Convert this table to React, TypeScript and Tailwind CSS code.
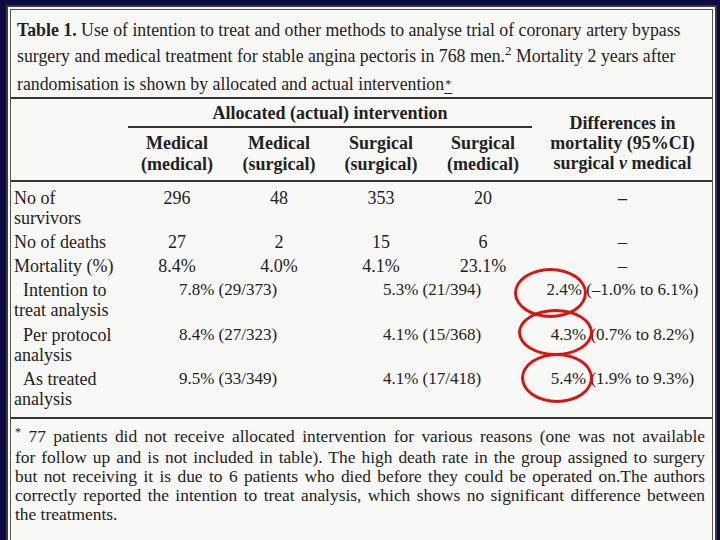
import React from "react";

const justifyLine = "block text-justify [text-align-last:justify]";

function Ring({ className }: { className: string }) {
  return (
    <div
      className={`pointer-events-none absolute rounded-[50%] border-[3px] border-[#d31616] ${className}`}
    />
  );
}

function Rule() {
  return <div className="h-[2px] bg-[#353535]" />;
}

export default function App() {
  return (
    <div className="h-[540px] w-[720px] overflow-hidden bg-[#0c0c44] pl-[6px] pr-[3px] pt-[5px]">
      <div className="h-[540px] border-2 border-[#3a3a3a] bg-[#f8f8f6] p-[2px]">
        <div className="h-full border border-[#555] font-['Liberation_Serif','Times_New_Roman',serif] text-[#222]">
          {/* caption */}
          <div className="pl-[6px] pt-[7px] text-[17.8px] leading-[26px]">
            <p>
              <b>Table 1.</b> Use of intention to treat and other methods to analyse trial of coronary artery bypass
            </p>
            <p>
              surgery and medical treatment for stable angina pectoris in 768 men.
              <span className="relative -top-[7px] text-[13px]">2</span> Mortality 2 years after
            </p>
            <p>
              randomisation is shown by allocated and actual intervention
              <span className="inline-flex flex-col items-center align-[2px] text-[12px] leading-[8px]">
                <span>*</span>
                <span className="text-[16px]">–</span>
              </span>
            </p>
          </div>

          <Rule />

          {/* column headings */}
          <div className="flex h-[81px] text-[18px] font-bold">
            <div className="w-[115px]" />
            <div className="w-[408px] pt-[4px]">
              <div className="mx-[2px] border-b-2 border-[#353535] pb-[3px] text-center leading-[20px]">
                Allocated (actual) intervention
              </div>
              <div className="grid grid-cols-4 pt-[5px] text-center leading-[21px]">
                <div>Medical<br />(medical)</div>
                <div>Medical<br />(surgical)</div>
                <div>Surgical<br />(surgical)</div>
                <div>Surgical<br />(medical)</div>
              </div>
            </div>
            <div className="w-[177px] pt-[14px] text-center leading-[20px]">
              Differences in<br />
              mortality (95%CI)<br />
              surgical <i>v</i> medical
            </div>
          </div>

          <Rule />

          {/* body */}
          <div className="grid grid-cols-[115px_102px_102px_102px_102px_177px] gap-y-[4.3px] pb-[8px] pt-[5.6px] text-[18px] leading-[20px]">
            <div className="pl-[3px]">No of<br />survivors</div>
            <div className="text-center">296</div>
            <div className="text-center">48</div>
            <div className="text-center">353</div>
            <div className="text-center">20</div>
            <div className="text-center font-bold">–</div>

            <div className="pl-[3px]">No of deaths</div>
            <div className="text-center">27</div>
            <div className="text-center">2</div>
            <div className="text-center">15</div>
            <div className="text-center">6</div>
            <div className="text-center">–</div>

            <div className="pl-[3px]">Mortality (%)</div>
            <div className="text-center">8.4%</div>
            <div className="text-center">4.0%</div>
            <div className="text-center">4.1%</div>
            <div className="text-center">23.1%</div>
            <div className="text-center">–</div>

            <div className="pl-[3px] indent-[9px]">Intention to<br />treat analysis</div>
            <div className="col-span-2 text-center text-[17px]">7.8% (29/373)</div>
            <div className="col-span-2 text-center text-[17px]">5.3% (21/394)</div>
            <div className="relative text-center text-[17px]">
              2.4% (–1.0% to 6.1%)
              <Ring className="-left-[20px] -top-[12px] h-[50px] w-[73px]" />
            </div>

            <div className="pl-[3px] indent-[9px]">Per protocol<br />analysis</div>
            <div className="col-span-2 text-center text-[17px]">8.4% (27/323)</div>
            <div className="col-span-2 text-center text-[17px]">4.1% (15/368)</div>
            <div className="relative text-center text-[17px]">
              4.3% (0.7% to 8.2%)
              <Ring className="-left-[16px] -top-[16px] h-[47px] w-[75px]" />
            </div>

            <div className="pl-[3px] indent-[9px]">As treated<br />analysis</div>
            <div className="col-span-2 text-center text-[17px]">9.5% (33/349)</div>
            <div className="col-span-2 text-center text-[17px]">4.1% (17/418)</div>
            <div className="relative text-center text-[17px]">
              5.4% (1.9% to 9.3%)
              <Ring className="-left-[13px] -top-[16px] h-[50px] w-[72px]" />
            </div>
          </div>

          <Rule />

          {/* footnote */}
          <div className="pl-[4px] pr-[7px] pt-[8.4px] text-[17.4px] leading-[19px]">
            <span className={justifyLine}>
              <span className="relative -top-[6px] text-[12px]">*</span> 77 patients did not receive allocated intervention for various reasons (one was not available
            </span>
            <span className={justifyLine}>
              for follow up and is not included in table). The high death rate in the group assigned to surgery
            </span>
            <span className={justifyLine}>
              but not receiving it is due to 6 patients who died before they could be operated on.The authors
            </span>
            <span className={justifyLine}>
              correctly reported the intention to treat analysis, which shows no significant difference between
            </span>
            <span className="block">the treatments.</span>
          </div>
        </div>
      </div>
    </div>
  );
}
